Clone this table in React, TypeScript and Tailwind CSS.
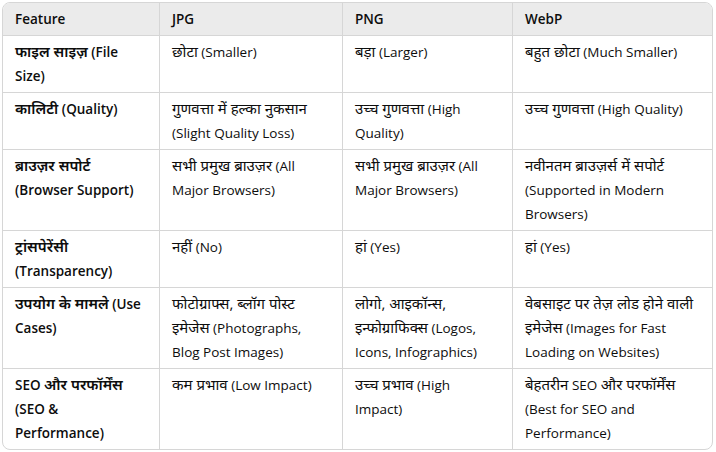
import React from "react";

const rows: string[][] = [
  ["फाइल साइज़ (File Size)", "छोटा (Smaller)", "बड़ा (Larger)", "बहुत छोटा (Much Smaller)"],
  ["कालिटी (Quality)", "गुणवत्ता में हल्का नुकसान (Slight Quality Loss)", "उच्च गुणवत्ता (High Quality)", "उच्च गुणवत्ता (High Quality)"],
  ["ब्राउज़र सपोर्ट (Browser Support)", "सभी प्रमुख ब्राउज़र (All Major Browsers)", "सभी प्रमुख ब्राउज़र (All Major Browsers)", "नवीनतम ब्राउज़र्स में सपोर्ट (Supported in Modern Browsers)"],
  ["ट्रांसपेरेंसी (Transparency)", "नहीं (No)", "हां (Yes)", "हां (Yes)"],
  ["उपयोग के मामले (Use Cases)", "फोटोग्राफ्स, ब्लॉग पोस्ट इमेजेस (Photographs, Blog Post Images)", "लोगो, आइकॉन्स, इन्फोग्राफिक्स (Logos, Icons, Infographics)", "वेबसाइट पर तेज़ लोड होने वाली इमेजेस (Images for Fast Loading on Websites)"],
  ["SEO और परफॉर्मेंस (SEO & Performance)", "कम प्रभाव (Low Impact)", "उच्च प्रभाव (High Impact)", "बेहतरीन SEO और परफॉर्मेंस (Best for SEO and Performance)"],
];

const headers = ["Feature", "JPG", "PNG", "WebP"];

function Mixed({ text }: { text: string }) {
  const parts = text.split(/([\u0900-\u097F]+(?:[ ,]+[\u0900-\u097F]+)*,?)/g).filter((p) => p.length > 0);
  return (
    <>
      {parts.map((p, i) =>
        /[\u0900-\u097F]/.test(p) ? (
          <span key={i} className="text-[15px] leading-[16px]">
            {p}
          </span>
        ) : (
          <span key={i}>{p}</span>
        )
      )}
    </>
  );
}

export default function App() {
  return (
    <div className="w-[716px] h-[452px] bg-white pt-[2px] pl-[2px]" style={{ fontFamily: '"Open Sans", "Noto Sans", sans-serif' }}>
      <div className="w-[711px] border border-[#d6d6d6] rounded-lg overflow-hidden text-[13.5px] leading-[24px] text-[#0d0d0d]">
        <div className="grid grid-cols-[157px_183px_170px_199px] bg-[#ebebeb] border-b border-[#d6d6d6]">
          {headers.map((h, i) => (
            <div key={h} className={`px-3 py-1 font-semibold ${i < 3 ? "border-r border-[#d6d6d6]" : ""}`}>
              {h}
            </div>
          ))}
        </div>
        {rows.map((r, ri) => (
          <div key={ri} className={`grid grid-cols-[157px_183px_170px_199px] ${ri < rows.length - 1 ? "border-b border-[#d6d6d6]" : ""}`}>
            {r.map((c, ci) => (
              <div
                key={ci}
                className={`py-1 px-3 ${ci === 0 ? "font-semibold" : ""} ${ci < 3 ? "border-r border-[#d6d6d6]" : ""}`}
              >
                <Mixed text={c} />
              </div>
            ))}
          </div>
        ))}
      </div>
    </div>
  );
}
